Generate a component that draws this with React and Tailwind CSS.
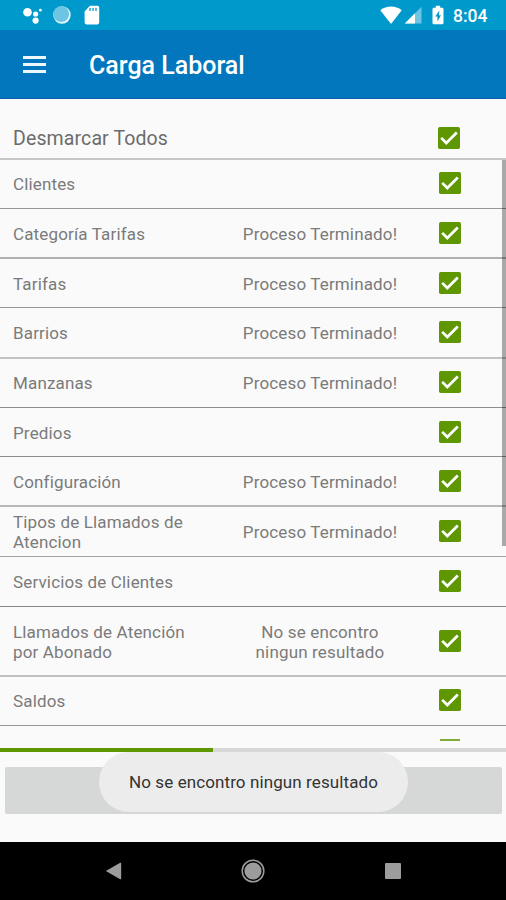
const DONE = "Proceso Terminado!";

const rows = [
  { name: "Clientes", h: "h-[49px] pb-[2px]", line: "border-b border-[#969696]" },
  { name: "Categoría Tarifas", status: DONE, h: "h-[50px]", line: "border-b-2 border-[#b0b0b0]" },
  { name: "Tarifas", status: DONE, h: "h-[49px]", line: "border-b border-[#969696]" },
  { name: "Barrios", status: DONE, h: "h-[51px] pb-px", line: "border-b-2 border-[#c2c2c2]" },
  { name: "Manzanas", status: DONE, h: "h-[49px] pb-[2px]", line: "border-b border-[#8e8e8e]" },
  { name: "Predios", h: "h-[49px]", line: "border-b border-[#8e8e8e]" },
  { name: "Configuración", status: DONE, h: "h-[50px]", line: "border-b-2 border-[#b8b8b8]" },
  { name: "Tipos de Llamados de Atencion", status: DONE, h: "h-[50px] pb-[2px]", line: "border-b border-[#a2a2a2]" },
  { name: "Servicios de Clientes", h: "h-[50px] pb-[2px]", line: "border-b border-[#868686]" },
  { name: "Llamados de Atención por Abonado", status: "No se encontro ningun resultado", h: "h-[70px]", line: "border-b-2 border-[#c0c0c0]" },
  { name: "Saldos", h: "h-[49px] pb-[2px]", line: "border-b border-[#969696]" },
];

function Check() {
  return (
    <svg className="block shrink-0" width="22" height="22" viewBox="0 0 22 22">
      <rect width="22" height="22" rx="1.8" fill="#5f9703" />
      <path d="M3.2 10.900 8.300 16 18.800 5.500" fill="none" stroke="#fff" strokeWidth="2.700" />
    </svg>
  );
}

function StatusBar() {
  return (
    <div className="flex h-[30px] items-center bg-[#0099cc] text-white">
      <svg className="ml-[22px]" width="21" height="20" viewBox="0 0 21 20" fill="#fff">
        <circle cx="5.5" cy="7.2" r="4.3" />
        <circle cx="13.6" cy="9" r="2.6" />
        <circle cx="18.3" cy="5.2" r="1.4" />
        <circle cx="13.6" cy="15.6" r="3.1" />
      </svg>
      <svg className="ml-[10px]" width="18" height="18" viewBox="0 0 18 18">
        <circle cx="9" cy="9" r="8.7" fill="#e8f7fc" />
        <circle cx="8.200" cy="8.200" r="7.900" fill="#6cc5e3" />
      </svg>
      <svg className="ml-[13px]" width="16" height="20" viewBox="0 0 16 20">
        <path d="M6 .8h7.4A1.800 1.800 0 0 1 15.200 2.600V17.600a1.800 1.800 0 0 1-1.800 1.800H2.400A1.800 1.800 0 0 1 .6 17.600V6.400Z" fill="#fff" />
        <path d="M6 3v3M9 3v3M12 3v3" stroke="#0099cc" strokeWidth="1.300" />
      </svg>
      <svg className="ml-auto" width="22" height="19" viewBox="0 0 22 19">
        <path d="M.3 4.200C6.500-.6 15.500-.6 21.700 4.200L11 18Z" fill="#fff" />
      </svg>
      <svg className="ml-[2px]" width="18" height="18" viewBox="0 0 18 18">
        <path d="M17.500.8V17.400H.8Z" fill="#6cc5e3" />
        <path d="M11 7.300V17.400H.8Z" fill="#fff" />
      </svg>
      <svg className="ml-[10px]" width="12" height="20" viewBox="0 0 12 20">
        <path d="M3.800.8h4.400v2h2A1.300 1.300 0 0 1 11.500 4v14a1.300 1.300 0 0 1-1.300 1.300H1.800A1.300 1.300 0 0 1 .5 18V4a1.300 1.300 0 0 1 1.300-1.200h2Z" fill="#fff" />
        <path d="M7.400 5.400 3.200 11.600h2.200v4.800l3.600-6.200H6.800Z" fill="#0099cc" />
      </svg>
      <span className="mr-[18px] ml-[9px] w-[35px] pt-[2px] text-[17.500px] leading-5 font-medium whitespace-nowrap">8:04</span>
    </div>
  );
}

export default function App() {
  return (
    <div className="flex h-[900px] w-[506px] flex-col overflow-hidden bg-[#fafafa] font-['Roboto',sans-serif] text-[#7a7a7a]">
      <StatusBar />
      <header className="flex h-[69px] items-center border-b border-[#0b5cab] bg-[#0277bd]">
        <div className="ml-[23px] flex w-[23px] flex-col gap-[4px]">
          <div className="h-[3px] bg-[#eef7fc]" />
          <div className="h-[3px] bg-[#eef7fc]" />
          <div className="h-[3px] bg-[#eef7fc]" />
        </div>
        <h1 className="ml-[43px] pt-[4px] text-[25px] leading-8 font-medium text-white">Carga Laboral</h1>
      </header>

      <div className="flex h-[61px] items-end justify-between border-b-2 border-[#c6c6c6] pr-[46px] pb-[9px] pl-[13px]">
        <span className="text-[19.500px] leading-5 tracking-[0.120px] text-[#6c6c6c]">Desmarcar Todos</span>
        <Check />
      </div>

      <div className="relative h-[588px] shrink-0 overflow-hidden">
        {rows.map((r) => (
          <div key={r.name} className={`flex items-center pl-[13px] text-[17px] leading-5 tracking-[0.150px] ${r.h} ${r.line}`}>
            <span className="w-[187px] pt-[2px]">{r.name}</span>
            <span className="ml-[40px] w-[160px] pt-[2px] text-center">{r.status}</span>
            <div className="ml-[39px]">
              <Check />
            </div>
          </div>
        ))}
        <div className="mt-[13px] ml-[440px] h-[2px] w-[20px] bg-[#7fab38]" />
        <div className="absolute top-0 right-0 h-[386px] w-[4px] bg-[#000]/32" />
      </div>

      <div className="relative flex h-[94px] shrink-0 flex-col">
        <div className="h-[4px] bg-[#d7d7d7]">
          <div className="h-full w-[213px] bg-[#5f9703]" />
        </div>
        <div className="mr-[4px] ml-[5px] mt-[15px] h-[47px] rounded-[2px] bg-[#d6d7d7]" />
        <div className="absolute top-[4px] left-[99px] flex h-[60px] w-[309px] items-center justify-center rounded-full bg-[#ececec] pt-[2px] text-[17px] tracking-[0.100px] whitespace-nowrap text-[#333]">
          No se encontro ningun resultado
        </div>
      </div>

      <nav className="flex grow items-center bg-black">
        <svg className="ml-[105px]" width="17" height="20" viewBox="0 0 17 20">
          <path d="M.8 10 15.200 1.800a.7.700 0 0 1 1 .6v15.200a.7.700 0 0 1-1 .6Z" fill="#9c9c9c" />
        </svg>
        <svg className="ml-[119px]" width="24" height="24" viewBox="0 0 24 24">
          <circle cx="12" cy="12" r="10.800" fill="none" stroke="#9c9c9c" strokeWidth="1.500" />
          <circle cx="12" cy="12" r="8.600" fill="#9c9c9c" />
        </svg>
        <div className="ml-[120px] h-4 w-4 rounded-[1px] bg-[#9c9c9c]" />
      </nav>
    </div>
  );
}
